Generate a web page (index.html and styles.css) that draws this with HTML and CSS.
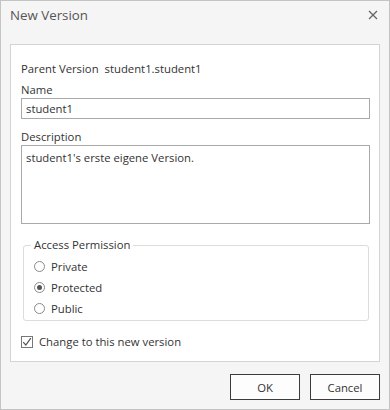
FILE: index.html
```html
<!DOCTYPE html>
<html>
<head>
<meta charset="utf-8">
<link rel="stylesheet" href="styles.css">
</head>
<body>
<div class="window">
  <div class="titlebar">
    <span class="title">New Version</span>
    <span class="close"><svg width="10" height="10" viewBox="0 0 10 10"><path d="M1 1L9 9M9 1L1 9" stroke="#666" stroke-width="1.3" fill="none"/></svg></span>
  </div>
  <div class="panel">
    <div class="parent-row"><span>Parent Version</span><span class="pv">student1.student1</span></div>
    <div class="label">Name</div>
    <div class="input">student1</div>
    <div class="label label-desc">Description</div>
    <div class="textarea">student1's erste eigene Version.</div>
    <fieldset class="group">
      <legend>Access Permission</legend>
      <div class="radio"><span class="circle"></span><span>Private</span></div>
      <div class="radio"><span class="circle checked"></span><span>Protected</span></div>
      <div class="radio"><span class="circle"></span><span>Public</span></div>
    </fieldset>
    <div class="check-row"><span class="box"><svg width="10" height="10" viewBox="0 0 10 10"><path d="M1.2 5.2L3.8 8L8.8 1.2" stroke="#555" stroke-width="1.2" fill="none"/></svg></span><span>Change to this new version</span></div>
  </div>
  <div class="buttons">
    <button class="btn">OK</button>
    <button class="btn">Cancel</button>
  </div>
</div>
</body>
</html>
```
FILE: styles.css
```css
html, body {
  margin: 0;
  padding: 0;
}
body {
  font-family: "Open Sans", "Noto Sans", sans-serif;
  font-size: 11.3px;
  color: #333;
}
.window {
  width: 390px;
  height: 410px;
  box-sizing: border-box;
  border: 1px solid #c4c4c4;
  background: #f5f5f5;
  display: flex;
  flex-direction: column;
}
.titlebar {
  height: 28px;
  display: flex;
  align-items: center;
  justify-content: space-between;
  padding: 0 11px 0 9px;
}
.title {
  font-size: 13.3px;
  color: #555;
}
.close {
  display: flex;
}
.panel {
  margin: 15px 0 0 9px;
  width: 370px;
  height: 318px;
  box-sizing: border-box;
  background: #fff;
  border: 1px solid #d4d4d4;
  padding: 16px 9px 0 10px;
  display: flex;
  flex-direction: column;
}
.parent-row {
  line-height: 16px;
  display: flex;
  gap: 6px;
}
.label {
  line-height: 16px;
  margin-top: 5px;
}
.label-desc {
  margin-top: 10px;
}
.input {
  height: 21px;
  box-sizing: border-box;
  border: 1px solid #a9a9a9;
  padding: 0 4px;
  line-height: 20px;
}
.textarea {
  height: 79px;
  box-sizing: border-box;
  border: 1px solid #a9a9a9;
  padding: 2px 4px 0;
  line-height: 19px;
}
.group {
  margin: 13px 1px 0 2px;
  padding: 3px 0 1px 10px;
  border: 1px solid #dcdcdc;
  border-radius: 3px;
  min-width: 0;
}
.group legend {
  padding: 0 3px;
  margin-left: -3px;
  line-height: 16px;
}
.radio {
  display: flex;
  align-items: center;
  gap: 6px;
  height: 21px;
}
.circle {
  width: 11px;
  height: 11px;
  box-sizing: border-box;
  border: 1px solid #8a8a8a;
  border-radius: 50%;
  background: #fff;
  display: flex;
  align-items: center;
  justify-content: center;
}
.circle.checked::after {
  content: "";
  width: 5px;
  height: 5px;
  border-radius: 50%;
  background: #555;
}
.check-row {
  margin-top: 13px;
  display: flex;
  align-items: center;
  gap: 6px;
  line-height: 16px;
}
.box {
  width: 12px;
  height: 12px;
  box-sizing: border-box;
  border: 1px solid #777;
  background: #fff;
  display: flex;
  align-items: center;
  justify-content: center;
}
.buttons {
  display: flex;
  justify-content: flex-end;
  gap: 10px;
  padding: 12px 9px 0 0;
}
.btn {
  width: 70px;
  height: 26px;
  font-family: "Open Sans", "Noto Sans", sans-serif;
  font-size: 11.3px;
  color: #333;
  background: #fdfdfd;
  border: 1px solid #3c3c3c;
  padding: 0;
}
```
